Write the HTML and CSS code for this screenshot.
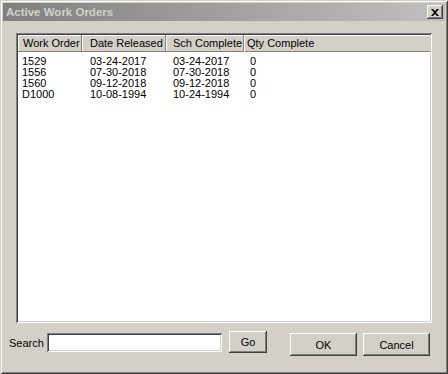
FILE: index.html
```html
<!DOCTYPE html>
<html>
<head>
<meta charset="utf-8">
<link rel="stylesheet" href="styles.css">
</head>
<body>
<div class="window">
  <div class="titlebar">
    <span class="title">Active Work Orders</span>
    <button class="close" aria-label="Close">
      <svg width="8" height="7" viewBox="0 0 8 7"><path d="M0 0h2l2 2 2-2h2L5 3.5 8 7H6L4 5 2 7H0l3-3.5z" fill="#000"/></svg>
    </button>
  </div>
  <div class="content">
    <div class="list">
      <div class="header">
        <div class="hcell c1">Work Order</div>
        <div class="hcell c2">Date Released</div>
        <div class="hcell c3">Sch Complete</div>
        <div class="hcell c4 last">Qty Complete</div>
      </div>
      <div class="rows">
        <div class="row"><span class="c1">1529</span><span class="c2">03-24-2017</span><span class="c3">03-24-2017</span><span class="c4">0</span></div>
        <div class="row"><span class="c1">1556</span><span class="c2">07-30-2018</span><span class="c3">07-30-2018</span><span class="c4">0</span></div>
        <div class="row"><span class="c1">1560</span><span class="c2">09-12-2018</span><span class="c3">09-12-2018</span><span class="c4">0</span></div>
        <div class="row"><span class="c1">D1000</span><span class="c2">10-08-1994</span><span class="c3">10-24-1994</span><span class="c4">0</span></div>
      </div>
    </div>
    <div class="bottom">
      <label class="search-label">Search</label>
      <input class="search" type="text">
      <button class="btn go">Go</button>
      <button class="btn ok">OK</button>
      <button class="btn cancel">Cancel</button>
    </div>
  </div>
</div>
</body>
</html>
```
FILE: styles.css
```css
* { box-sizing: border-box; }
html, body { margin: 0; padding: 0; background: #d4d0c8; }
body {
  font-family: "Liberation Sans", Arial, sans-serif;
  font-size: 11px;
  color: #000;
}
.window {
  width: 448px;
  height: 374px;
  background: #d4d0c8;
  padding: 3px;
  box-shadow: inset 1px 1px 0 #d4d0c8, inset -1px -1px 0 #404040, inset 2px 2px 0 #ffffff, inset -2px -2px 0 #808080;
  display: flex;
  flex-direction: column;
}
.titlebar {
  height: 18px;
  background: linear-gradient(to right, #808080, #c0c0c0);
  display: flex;
  align-items: center;
  padding: 0 2px 0 3px;
}
.title {
  flex: 1;
  font-weight: bold;
  color: #d4d0c8;
  font-size: 11.5px;
}
.close {
  width: 16px;
  height: 14px;
  padding: 0;
  margin: 0;
  border: none;
  background: #d4d0c8;
  box-shadow: inset -1px -1px 0 #404040, inset 1px 1px 0 #ffffff, inset -2px -2px 0 #808080;
  display: flex;
  align-items: center;
  justify-content: center;
}
.content {
  flex: 1;
  display: flex;
  flex-direction: column;
  padding: 12px 13px 0 6px;
}
.list {
  margin-left: 7px;
  height: 290px;
  background: #fff;
  box-shadow: inset 1px 1px 0 #808080, inset -1px -1px 0 #ffffff, inset 2px 2px 0 #404040, inset -2px -2px 0 #d4d0c8;
  padding: 2px;
  display: flex;
  flex-direction: column;
}
.header {
  height: 17px;
  display: flex;
  background: #d4d0c8;
}
.hcell {
  height: 17px;
  line-height: 16px;
  background: #d4d0c8;
  box-shadow: inset -1px -1px 0 #808080, inset 1px 1px 0 #ffffff;
  white-space: nowrap;
}
.hcell.last {
  flex: 1;
  box-shadow: inset 1px 1px 0 #ffffff, inset 0 -1px 0 #808080;
}
.c1 { width: 64px; }
.c2 { width: 84px; }
.c3 { width: 78px; }
.c4 { width: 78px; }
.hcell.c1 { padding-left: 5px; }
.hcell.c2 { padding-left: 8px; }
.hcell.c3 { padding-left: 7px; }
.hcell.c4 { padding-left: 3px; }
.rows { padding-top: 4px; }
.row {
  display: flex;
  height: 11px;
  line-height: 11px;
  white-space: nowrap;
}
.row span { display: block; }
.row .c1 { padding-left: 4px; }
.row .c2 { padding-left: 8px; }
.row .c3 { padding-left: 7px; }
.row .c4 { padding-left: 6px; }
.bottom {
  display: flex;
  align-items: flex-start;
  margin-top: 8px;
  height: 25px;
}
.search-label {
  margin-top: 6px;
  width: 38px;
}
.search {
  width: 175px;
  height: 19px;
  margin-top: 2px;
  border: none;
  background: #fff;
  box-shadow: inset 1px 1px 0 #808080, inset -1px -1px 0 #ffffff, inset 2px 2px 0 #404040, inset -2px -2px 0 #d4d0c8;
  padding: 0;
  outline: none;
}
.btn {
  font-family: "Liberation Sans", Arial, sans-serif;
  font-size: 11px;
  color: #000;
  background: #d4d0c8;
  border: none;
  padding: 0;
  margin: 0;
  box-shadow: inset -1px -1px 0 #404040, inset 1px 1px 0 #ffffff, inset -2px -2px 0 #808080;
}
.go { width: 38px; height: 22px; margin-left: 7px; }
.ok { width: 67px; height: 23px; margin-left: 23px; margin-top: 2px; }
.cancel { width: 67px; height: 23px; margin-left: 6px; margin-top: 2px; }
```
